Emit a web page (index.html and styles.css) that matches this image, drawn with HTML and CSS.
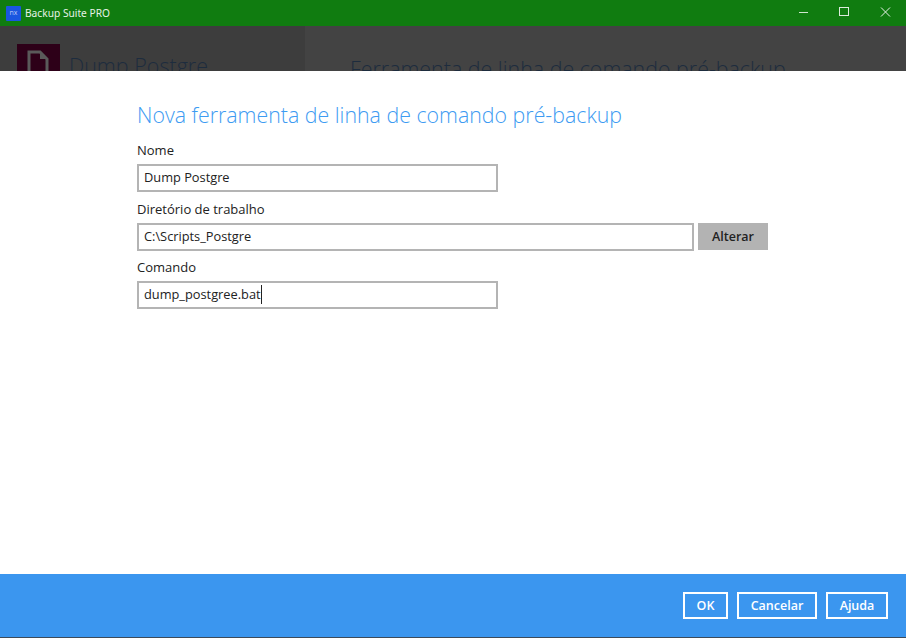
FILE: index.html
```html
<!DOCTYPE html>
<html lang="pt">
<head>
<meta charset="utf-8">
<title>Backup Suite PRO</title>
<link rel="stylesheet" href="styles.css">
</head>
<body>
<div class="window">
  <header class="titlebar">
    <div class="app-icon">nx</div>
    <div class="app-name">Backup Suite PRO</div>
    <div class="win-controls">
      <svg class="win-icon" width="42" height="26" viewBox="0 0 42 26"><path d="M13 12.500h9" stroke="#cfe5cf" stroke-width="1" fill="none"/></svg>
      <svg class="win-icon" width="42" height="26" viewBox="0 0 42 26"><rect x="11.500" y="7.500" width="9" height="8" stroke="#dcebdc" fill="none"/></svg>
      <svg class="win-icon" width="36" height="26" viewBox="0 0 36 26"><path d="M11 7.500l9 9M20 7.500l-9 9" stroke="#e8f2e8" stroke-width="1" fill="none"/></svg>
    </div>
  </header>
  <div class="backdrop">
    <aside class="back-side">
      <div class="back-icon">
        <svg width="22" height="30" viewBox="0 0 22 30"><path d="M2 2h11l7 7v19H2z" fill="none" stroke="#5a5a5a" stroke-width="3"/><path d="M13 2v7h7z" fill="#5a5a5a"/></svg>
      </div>
      <div class="back-name">Dump Postgre</div>
    </aside>
    <div class="back-main">Ferramenta de linha de comando pré-backup</div>
  </div>
  <main class="dialog">
    <section class="form">
      <h1 class="heading">Nova ferramenta de linha de comando pré-backup</h1>
      <div class="field">
        <label class="label">Nome</label>
        <div class="input short">Dump Postgre</div>
      </div>
      <div class="field">
        <label class="label">Diretório de trabalho</label>
        <div class="row">
          <div class="input long">C:\Scripts_Postgre</div>
          <button class="btn-change">Alterar</button>
        </div>
      </div>
      <div class="field">
        <label class="label">Comando</label>
        <div class="input short"><span class="caret-text">dump_postgree.bat</span></div>
      </div>
    </section>
    <footer class="footer">
      <button class="btn btn-ok">OK</button>
      <button class="btn btn-cancel">Cancelar</button>
      <button class="btn btn-help">Ajuda</button>
    </footer>
  </main>
</div>
</body>
</html>
```
FILE: styles.css
```css
* { box-sizing: border-box; }
html, body { margin: 0; padding: 0; height: 100%; }
body { font-family: "Open Sans", "Liberation Sans", sans-serif; background: #fff; overflow: hidden; }
.window { display: flex; flex-direction: column; width: 906px; height: 638px; }

.titlebar { display: flex; align-items: center; height: 26px; flex: none; background: #107c10; color: #e6f2e6; padding-left: 6px; }
.app-icon { width: 15px; height: 15px; background: #1a56e0; color: #b9c9f5; font-size: 7px; line-height: 14px; text-align: center; border-radius: 1px; }
.app-name { margin-left: 4px; font-family: "Noto Sans", "Open Sans", sans-serif; font-size: 10.200px; }
.win-controls { display: flex; margin-left: auto; }
.win-icon { display: block; }

.backdrop { display: flex; height: 45px; flex: none; overflow: hidden; background: #434343; }
.back-side { display: flex; width: 305px; flex: none; background: #3d3d3d; padding: 18px 0 0 17px; }
.back-icon { width: 43px; height: 43px; flex: none; background: #2d0018; padding: 6px 0 0 10px; }
.back-name { margin: 8px 0 0 9px; font-size: 21.500px; font-weight: 300; line-height: 28px; color: #1d2c3e; white-space: nowrap; }
.back-main { padding: 29px 0 0 45px; font-size: 21.400px; font-weight: 300; line-height: 28px; color: #1d2c3e; white-space: nowrap; }

.dialog { display: flex; flex-direction: column; flex: 1; min-height: 0; background: #fff; }
.form { flex: 1; padding: 28px 0 0 137px; }
.heading { margin: 0 0 10px; font-size: 21.350px; font-weight: 300; line-height: 31px; color: #3d9bf2; }
.field { margin-bottom: 6.500px; }
.label { display: block; margin-bottom: 4px; font-size: 13px; line-height: 20px; height: 20px; color: #222; }
.input { display: flex; align-items: center; height: 28px; padding: 0 0 2px 5px; border: 2px solid #b4b4b4; font-size: 12.800px; color: #222; background: #fff; }
.short { width: 361px; }
.long { width: 557px; }
.row { display: flex; align-items: center; gap: 4px; }
.caret-text { border-right: 1px solid #222; line-height: 19px; }
.btn-change { width: 70px; height: 27px; border: 0; background: #b3b3b3; color: #222; font-family: inherit; font-size: 12.500px; font-weight: 600; padding: 0; }

.footer { display: flex; justify-content: flex-end; align-items: center; gap: 9px; height: 64px; flex: none; padding: 0 18px 1px 0; background: #3b96ef; border-bottom: 1px solid #3c4a5a; }
.btn { height: 27px; border: 2px solid #fff; background: transparent; color: #fff; font-family: inherit; font-size: 12.500px; font-weight: 600; padding: 0; }
.btn-ok { width: 45px; }
.btn-cancel { width: 80px; }
.btn-help { width: 62px; }
```
